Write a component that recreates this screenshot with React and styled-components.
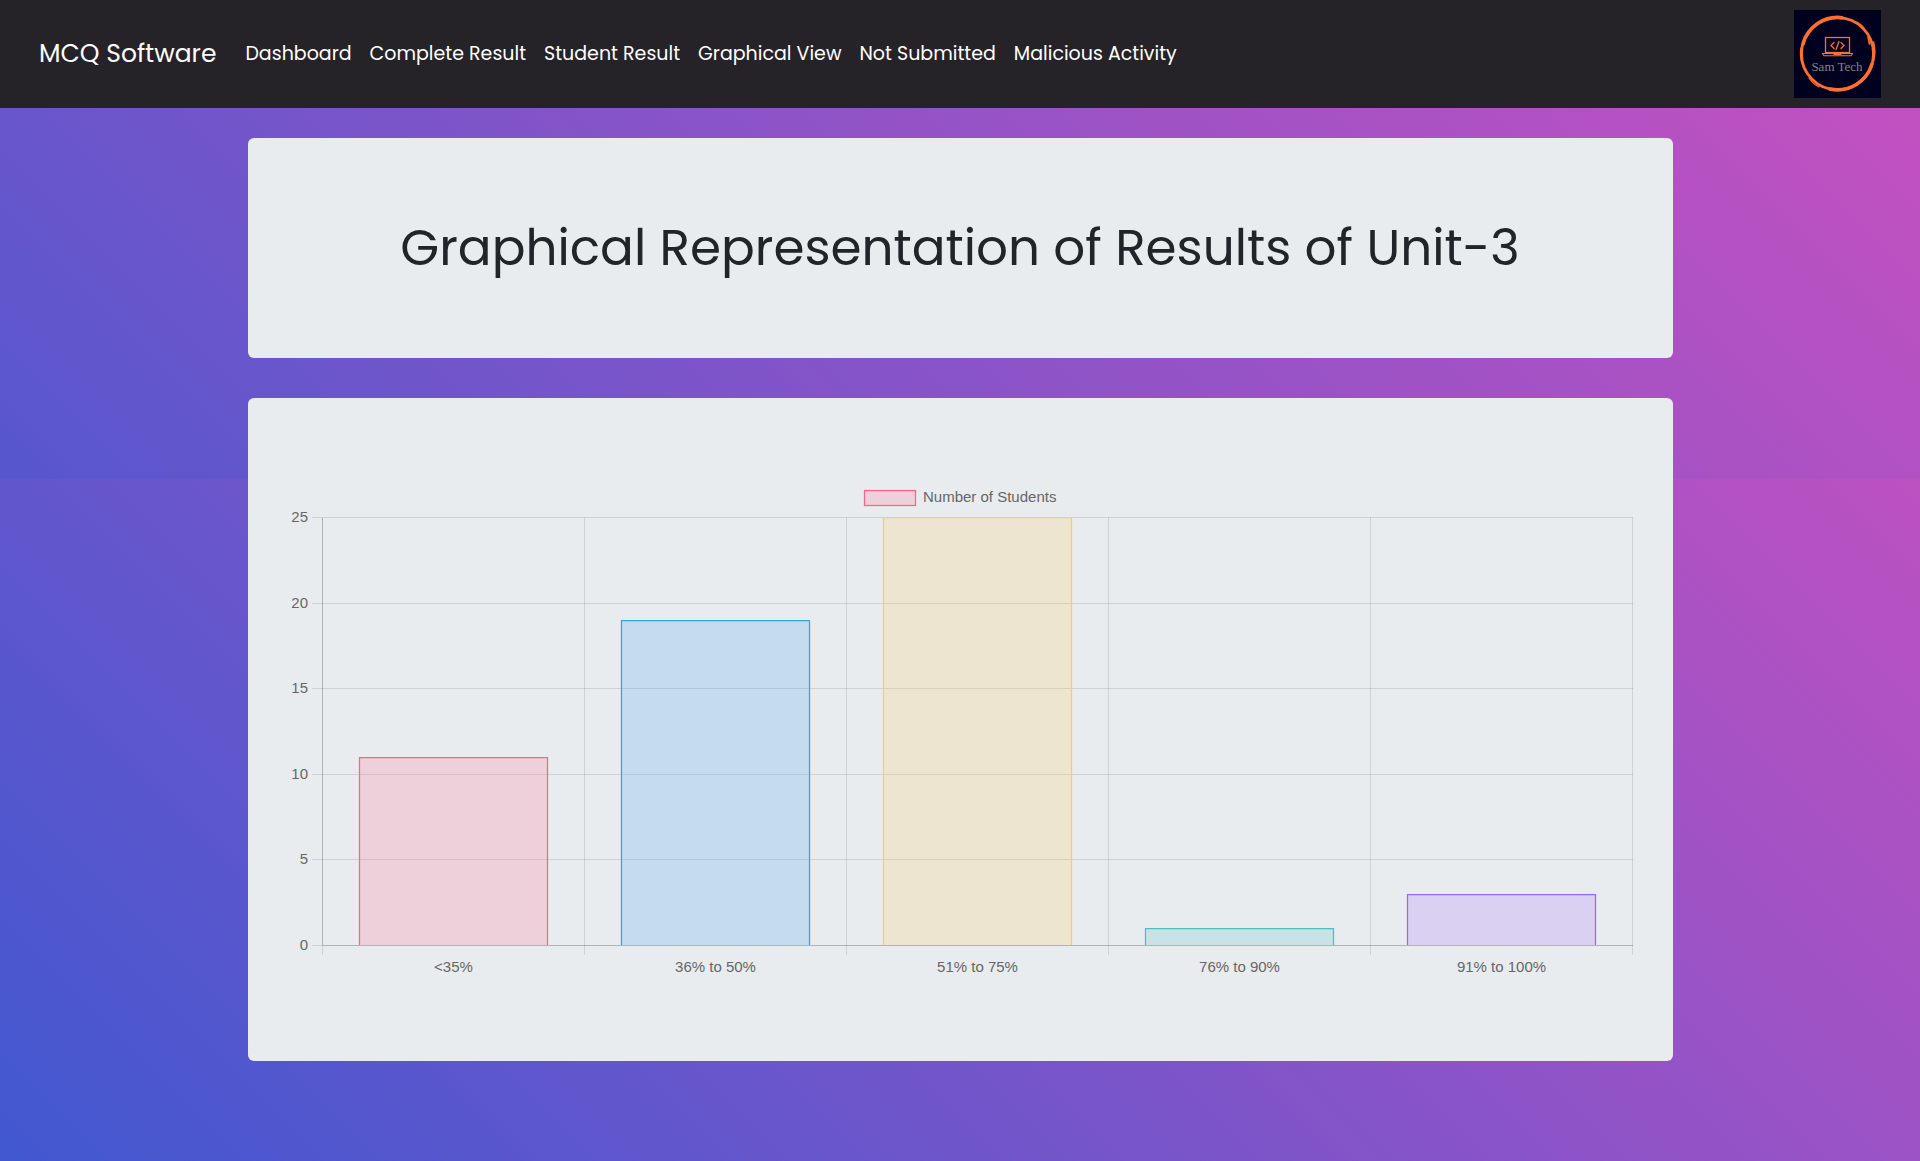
import React from "react";
import styled, { createGlobalStyle } from "styled-components";

const GlobalStyle = createGlobalStyle`
  *, *::before, *::after { box-sizing: border-box; }
  body {
    margin: 0;
    color: #212529;
    font-family: Poppins, Inter, sans-serif;
  }
`;

const gradient = "linear-gradient(45deg, #4158d0 0%, #c850c0 100%)";

const Page = styled.div`
  position: relative;
  z-index: 0;
  min-height: 100vh;
  padding-bottom: 100px;
  background: ${gradient} bottom / 100% 937px;

  /* upper band of the backdrop, restarting the gradient from the top */
  &::before {
    content: "";
    position: absolute;
    z-index: -1;
    top: 0;
    left: 0;
    right: 0;
    height: 479px;
    background: ${gradient} top / 100% 937px;
  }
`;

const Navbar = styled.header`
  display: flex;
  align-items: center;
  padding: 10px 39px;
  background: #252328;
`;

const Brand = styled.a`
  margin-right: 20px;
  color: #fff;
  font-size: 25px;
  line-height: 38px;
  text-decoration: none;
  white-space: nowrap;
`;

const NavList = styled.nav`
  display: flex;
  flex: 1;
`;

const NavLink = styled.a`
  padding: 10px 9px;
  color: #fff;
  font-size: 19px;
  line-height: 28px;
  text-decoration: none;
  white-space: nowrap;
`;

const LogoLink = styled.a`
  display: block;
  height: 88px;
`;

const Container = styled.main`
  display: flex;
  flex-direction: column;
  gap: 40px;
  max-width: 1425px;
  margin: 30px auto 0;
`;

const Card = styled.section`
  padding: 80px 40px;
  border-radius: 6px;
  background: #e9ecef;
`;

const Title = styled.h1`
  margin: 0;
  font-size: 50px;
  font-weight: 400;
  line-height: 60px;
  text-align: center;
`;

const ChartSvg = styled.svg`
  display: block;
  width: 100%;
  height: auto;
`;

const ChartText = styled.text`
  fill: #666;
  font-family: "Liberation Sans", Arial, sans-serif;
  font-size: 15px;
`;

const links = [
  "Dashboard",
  "Complete Result",
  "Student Result",
  "Graphical View",
  "Not Submitted",
  "Malicious Activity",
];

const data = [
  { label: "<35%", value: 11, rgb: "255, 99, 132" },
  { label: "36% to 50%", value: 19, rgb: "54, 162, 235" },
  { label: "51% to 75%", value: 25, rgb: "255, 206, 86" },
  { label: "76% to 90%", value: 1, rgb: "75, 192, 192" },
  { label: "91% to 100%", value: 3, rgb: "153, 102, 255" },
];

const plot = { left: 34.5, right: 1344.5, top: 39.5, bottom: 467.5 };
const step = (plot.right - plot.left) / data.length;
const yOf = (v) => Math.floor(plot.bottom - (v / 25) * (plot.bottom - plot.top)) + 0.5;

function ResultChart() {
  const barWidth = 188;
  return (
    <ChartSvg viewBox="0 0 1345 503" role="img" aria-label="Number of Students">
      <rect x="576.5" y="12.5" width="51" height="15" fill="rgba(255, 99, 132, 0.2)" stroke="rgb(255, 99, 132)" strokeWidth="1.25" />
      <ChartText x="635" y="24">Number of Students</ChartText>

      {[25, 20, 15, 10, 5, 0].map((v) => (
        <g key={v}>
          <line x1="24" x2="1345" y1={yOf(v)} y2={yOf(v)} stroke="rgba(0, 0, 0, 0.11)" />
          <ChartText x="20" y={yOf(v) + 4.5} textAnchor="end">{v}</ChartText>
        </g>
      ))}
      {[0, 1, 2, 3, 4, 5].map((i) => (
        <line
          key={i}
          x1={plot.left + i * step}
          x2={plot.left + i * step}
          y1={plot.top}
          y2="477"
          stroke="rgba(0, 0, 0, 0.11)"
        />
      ))}
      <path d="M34.5 40V467.5H1345" fill="none" stroke="rgba(0, 0, 0, 0.14)" />

      {data.map((d, i) => {
        const x = plot.left + i * step + 37;
        const y = yOf(d.value);
        return (
          <g key={d.label}>
            <path
              d={`M${x} 467V${y}H${x + barWidth}V467`}
              fill={`rgba(${d.rgb}, 0.2)`}
              stroke={`rgb(${d.rgb})`}
              strokeWidth="1.25"
            />
            <ChartText x={plot.left + (i + 0.5) * step} y="494" textAnchor="middle">
              {d.label}
            </ChartText>
          </g>
        );
      })}
    </ChartSvg>
  );
}

const LogoText = styled.text`
  fill: #858484;
  font-family: "Liberation Serif", serif;
  font-size: 13px;
`;

function Logo() {
  return (
    <svg width="87" height="88" viewBox="0 0 87 88" role="img" aria-label="Sam Tech">
      <rect width="87" height="88" fill="#00001f" />
      <g fill="none" stroke="#ff6f32" strokeLinecap="round">
        <circle cx="43.5" cy="43.7" r="36" strokeWidth="2.8" />
        <path d="M9 34A36 36 0 0 1 48 7.700" strokeWidth="3.6" />
        <path d="M78 54A36 36 0 0 1 36 79" strokeWidth="3.6" />
        <path d="M7 38Q5.500 47 9 56M8.500 54Q10 60 14 65" strokeWidth="1.600" />
        <path d="M63 12Q68 15 70 18" strokeWidth="1.200" />
        <path d="M79.500 32Q82 42 79.500 51M74 27L75.500 34" strokeWidth="1.600" />
        <path d="M15 68Q19 74 25 77" strokeWidth="1.200" />
        <rect x="31.500" y="27.500" width="24" height="15" strokeWidth="1.300" />
        <path d="M28.500 43.500H58.500L57 45.800H30ZM40 44.500H47" strokeWidth="1.100" />
        <path d="M40 32.500L37 35.500L40 38.500M47 32.500L50 35.500L47 38.500M45 31.500L42 39.500" strokeWidth="1.300" />
      </g>
      <LogoText x="43" y="61" textAnchor="middle">Sam Tech</LogoText>
    </svg>
  );
}

export default function App() {
  return (
    <Page>
      <GlobalStyle />
      <Navbar>
        <Brand href="#">MCQ Software</Brand>
        <NavList>
          {links.map((l) => (
            <NavLink key={l} href="#">{l}</NavLink>
          ))}
        </NavList>
        <LogoLink href="#"><Logo /></LogoLink>
      </Navbar>
      <Container>
        <Card>
          <Title>Graphical Representation of Results of Unit-3</Title>
        </Card>
        <Card>
          <ResultChart />
        </Card>
      </Container>
    </Page>
  );
}
